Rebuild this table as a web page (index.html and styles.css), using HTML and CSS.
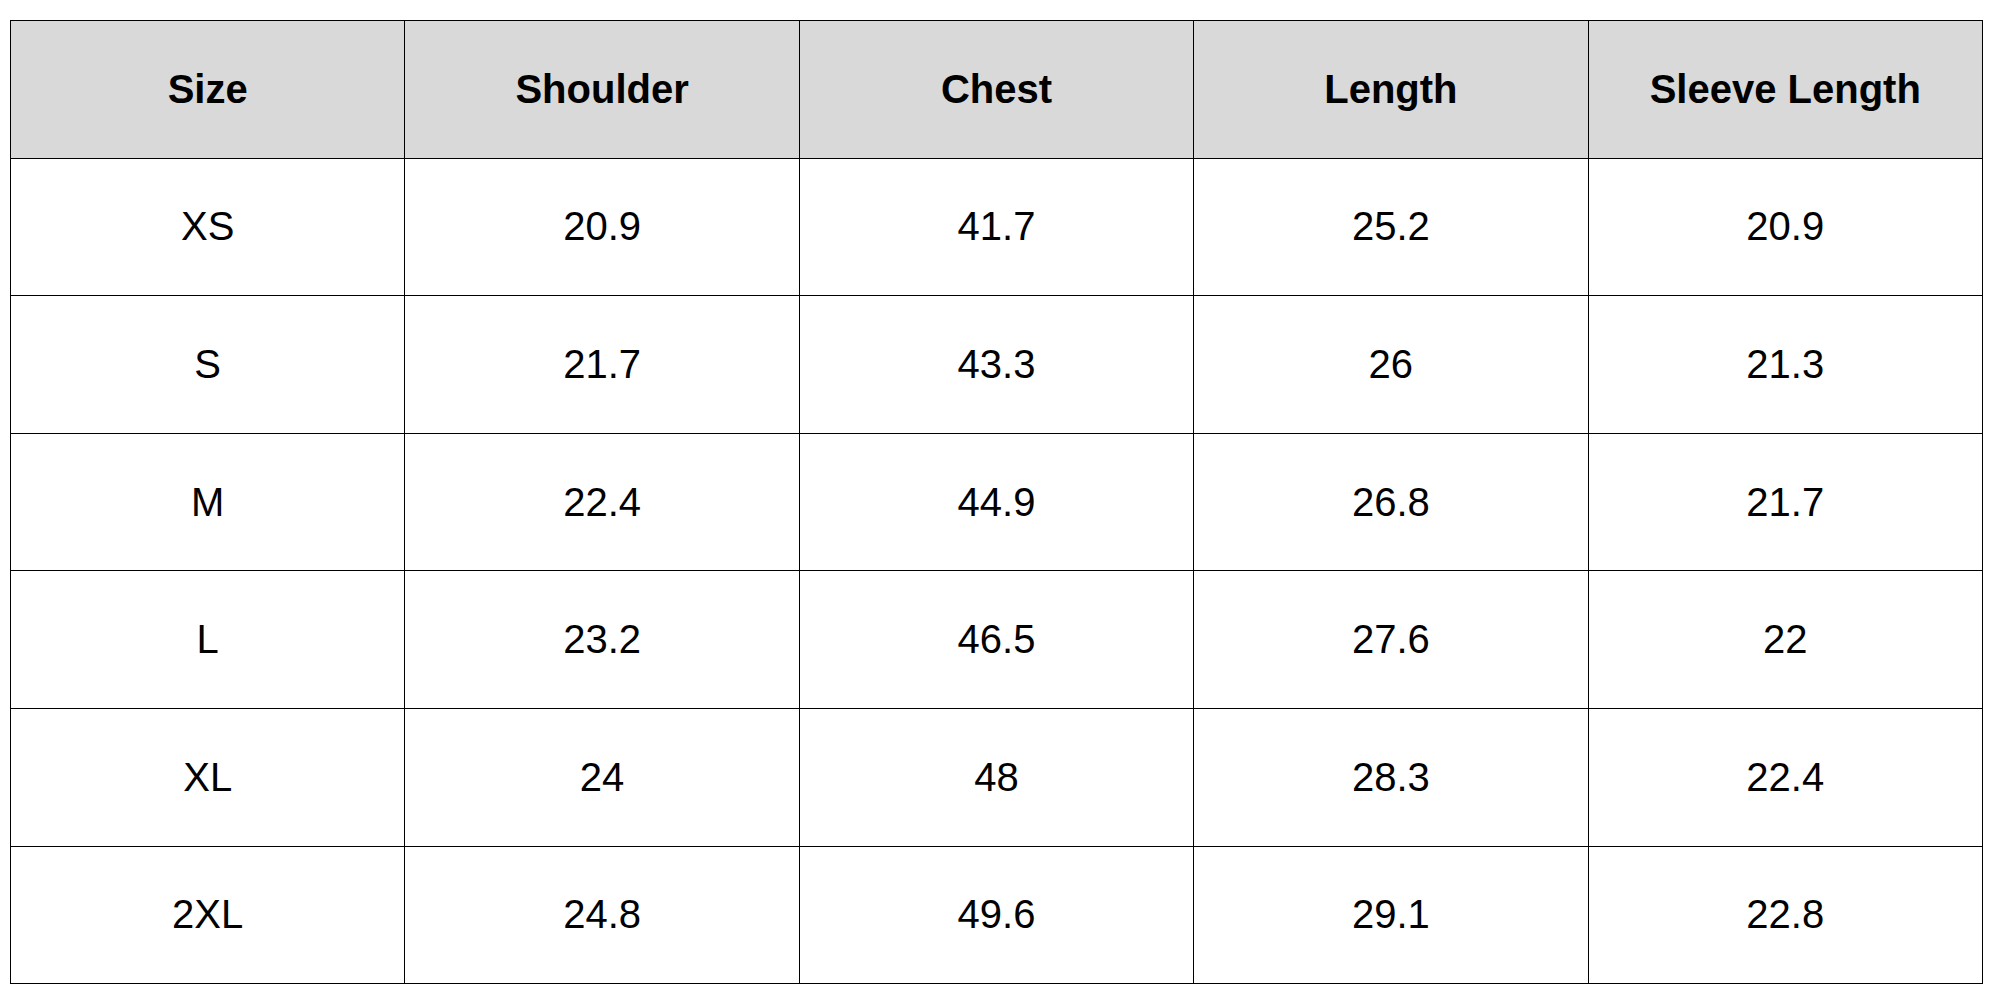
FILE: index.html
```html
<!DOCTYPE html>
<html>
<head>
<meta charset="utf-8">
<link rel="stylesheet" href="styles.css">
</head>
<body>
<table class="size-table">
  <thead>
    <tr><th>Size</th><th>Shoulder</th><th>Chest</th><th>Length</th><th>Sleeve Length</th></tr>
  </thead>
  <tbody>
    <tr><td>XS</td><td>20.9</td><td>41.7</td><td>25.2</td><td>20.9</td></tr>
    <tr><td>S</td><td>21.7</td><td>43.3</td><td>26</td><td>21.3</td></tr>
    <tr><td>M</td><td>22.4</td><td>44.9</td><td>26.8</td><td>21.7</td></tr>
    <tr><td>L</td><td>23.2</td><td>46.5</td><td>27.6</td><td>22</td></tr>
    <tr><td>XL</td><td>24</td><td>48</td><td>28.3</td><td>22.4</td></tr>
    <tr><td>2XL</td><td>24.8</td><td>49.6</td><td>29.1</td><td>22.8</td></tr>
  </tbody>
</table>
</body>
</html>
```
FILE: styles.css
```css
html, body {
  margin: 0;
  padding: 0;
  background: #fff;
}
body {
  padding: 20px 0 0 10px;
  font-family: "Liberation Sans", Arial, sans-serif;
}
.size-table {
  border-collapse: collapse;
  table-layout: fixed;
  width: 1973px;
  color: #000;
}
.size-table th,
.size-table td {
  border: 1px solid #000;
  height: 136.6px;
  padding: 0;
  text-align: center;
  vertical-align: middle;
  font-size: 40px;
}
.size-table th {
  background: #d9d9d9;
  font-weight: bold;
}
.size-table td {
  font-weight: normal;
}
```
